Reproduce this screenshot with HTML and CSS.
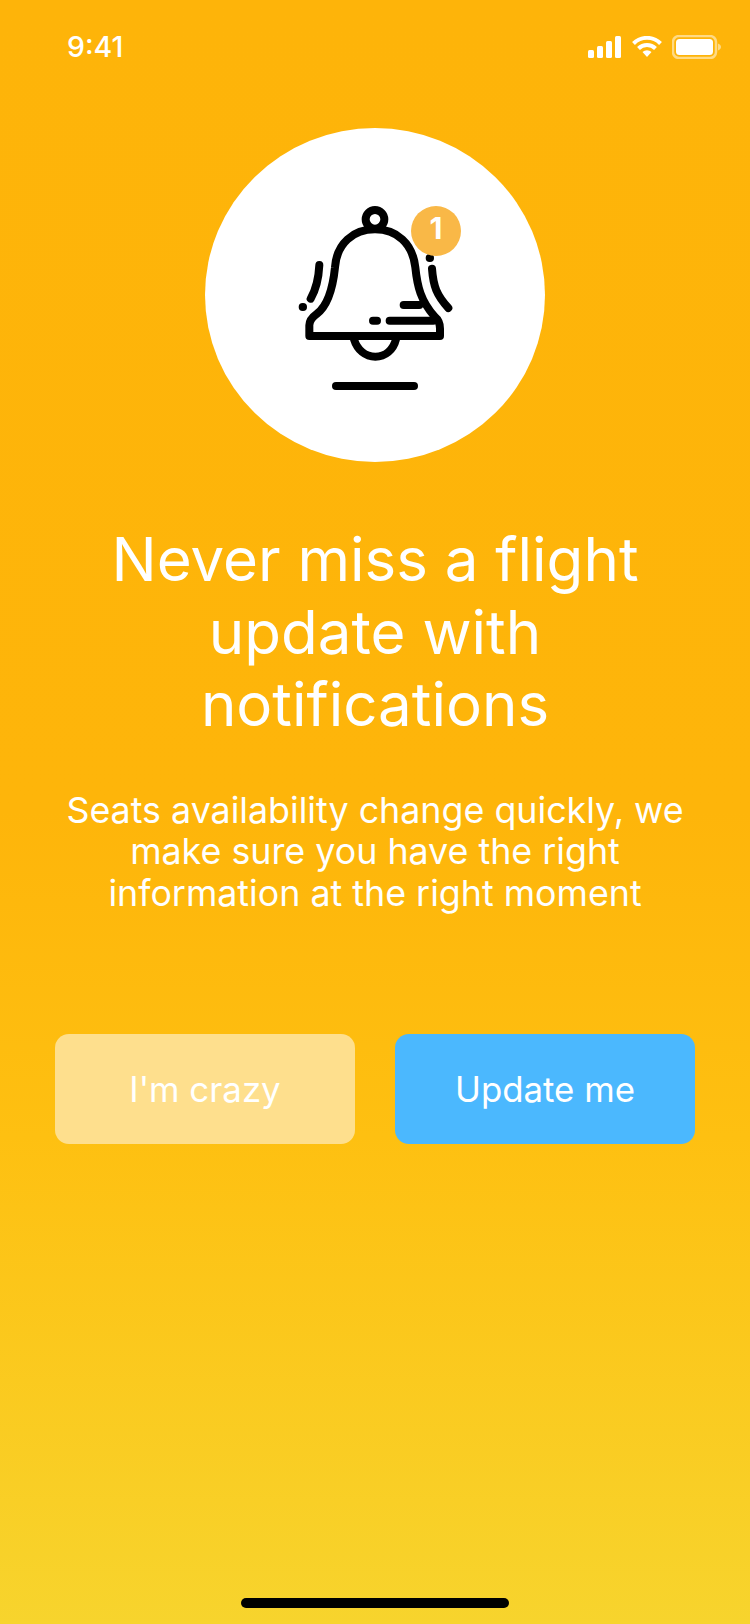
FILE: index.html
```html
<!DOCTYPE html>
<html lang="en">
<head>
<meta charset="utf-8">
<title>Notifications</title>
<link rel="stylesheet" href="styles.css">
</head>
<body>
<main class="screen">
  <header class="status">
    <span class="time">9:41</span>
    <div class="status-icons">
      <svg class="signal" viewBox="0 0 34 22" aria-hidden="true">
        <rect x="0" y="14" width="6" height="8" rx="1.5"/>
        <rect x="9" y="10" width="6" height="12" rx="1.5"/>
        <rect x="18" y="5" width="6" height="17" rx="1.5"/>
        <rect x="27" y="0" width="6" height="22" rx="1.5"/>
      </svg>
      <svg class="wifi" viewBox="0 0 30 22" aria-hidden="true">
        <path d="M1.5 7.5 A19 19 0 0 1 28.5 7.5" />
        <path d="M6.5 12.5 A12 12 0 0 1 23.5 12.5" />
        <path class="wifi-dot" d="M10.5 16 A6.5 6.5 0 0 1 19.5 16 L15 21 Z"/>
      </svg>
      <svg class="battery" viewBox="0 0 49 24" aria-hidden="true">
        <rect class="battery-shell" x="1" y="1" width="43" height="22" rx="6"/>
        <rect x="4" y="4" width="37" height="16" rx="3.5"/>
        <path class="battery-cap" d="M46 8.5 C48 9.5 49 10.5 49 12 C49 13.5 48 14.5 46 15.5 Z"/>
      </svg>
    </div>
  </header>

  <div class="hero">
    <svg class="bell" viewBox="0 0 630 690" aria-hidden="true">
      <circle cx="315" cy="118" r="28"/>
      <path d="M195 262 C200 190 250 148 315 148 C380 148 428 190 436 262 C442 320 452 362 494 410 C506 420 510 430 510 446 L510 468 L118 468 L118 436 C118 420 126 412 140 402 C172 378 188 330 195 262 Z"/>
      <path d="M252 478 C262 510 286 530 316 530 C346 530 370 510 378 478"/>
      <path d="M148 255 C146 295 140 325 122 356"/>
      <path d="M98 381 L99 381"/>
      <path d="M486 266 C490 320 500 345 535 384"/>
      <path d="M479 234 L480 234"/>
      <path d="M401 375 L448 375"/>
      <path d="M359 422 L490 422"/>
      <path d="M309 422 L321 422"/>
      <path d="M198 618 L432 618"/>
    </svg>
    <span class="badge">1</span>
  </div>

  <h1 class="title">Never miss a flight update with notifications</h1>
  <p class="lead">Seats availability change quickly, we make sure you have the right information at the right moment</p>

  <div class="actions">
    <button class="btn btn-muted" type="button">I'm crazy</button>
    <button class="btn btn-primary" type="button">Update me</button>
  </div>

  <div class="home-indicator"></div>
</main>
</body>
</html>
```
FILE: styles.css
```css
* { box-sizing: border-box; }
html, body { margin: 0; padding: 0; }
body { font-family: Inter, "Noto Sans", sans-serif; color: #fff; }
.screen {
  width: 750px;
  height: 1624px;
  background: linear-gradient(180deg, #feb409 0%, #feb50a 50%, #fec011 70%, #f7d42d 100%);
  display: flex;
  flex-direction: column;
  align-items: center;
}
.status {
  width: 100%;
  height: 128px;
  flex: none;
  display: flex;
  justify-content: space-between;
  align-items: flex-start;
  padding: 30px 29px 0 67px;
}
.time { font-size: 28.5px; line-height: 34px; font-weight: 500; }
.status-icons { display: flex; align-items: center; gap: 10px; height: 34px; }
.signal { width: 34px; height: 22px; fill: #fff; }
.wifi { width: 30px; height: 22px; fill: none; stroke: #fff; stroke-width: 4; }
.wifi-dot { fill: #fff; stroke: none; }
.battery { width: 49px; height: 24px; fill: #fff; }
.battery-shell { fill: none; stroke: rgba(255,255,255,.5); stroke-width: 2.5; }
.battery-cap { fill: rgba(255,255,255,.5); }
.hero {
  position: relative;
  flex: none;
  width: 340px;
  height: 334px;
  border-radius: 50%;
  background: #fff;
  display: flex;
  justify-content: center;
  align-items: center;
}
.bell {
  width: 210px;
  height: 230px;
  fill: none;
  stroke: #000;
  stroke-width: 24;
  stroke-linecap: round;
  stroke-linejoin: round;
}
.badge {
  position: absolute;
  left: 206px;
  top: 78px;
  width: 50px;
  height: 50px;
  border-radius: 50%;
  background: #f9b847;
  font-size: 30px;
  font-weight: 700;
  line-height: 45px;
  text-align: center;
}
.title {
  margin: 61px 0 0;
  width: 620px;
  font-size: 60px;
  font-weight: 400;
  line-height: 72.5px;
  text-align: center;
}
.lead {
  margin: 49px 0 0;
  width: 640px;
  font-size: 35.8px;
  font-weight: 400;
  line-height: 41.5px;
  text-align: center;
}
.actions {
  display: flex;
  gap: 40px;
  margin-top: 120px;
}
.btn {
  width: 300px;
  height: 110px;
  border: 0;
  border-radius: 14px;
  color: #fff;
  font-family: inherit;
  font-size: 34.8px;
  font-weight: 400;
}
.btn-muted { background: #fedf8d; }
.btn-primary { background: #4bb8fe; }
.home-indicator {
  width: 268px;
  height: 10px;
  margin-top: auto;
  margin-bottom: 16px;
  border-radius: 5px;
  background: #000;
}
```
